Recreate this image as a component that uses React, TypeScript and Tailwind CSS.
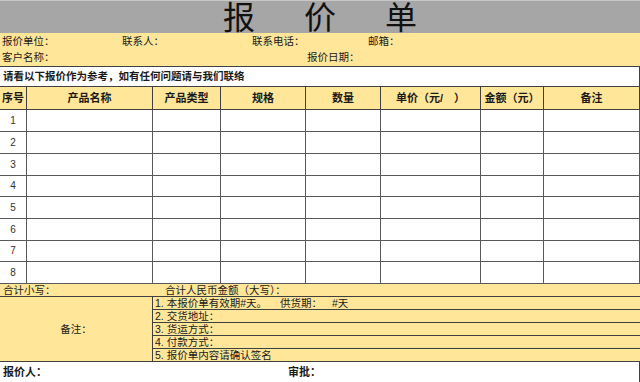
import React from "react";

const cols = "grid grid-cols-[27px_126px_68px_85px_75px_100px_63px_96px]";
const headers = ["序号", "产品名称", "产品类型", "规格", "数量", "单价（元/　）", "金额（元）", "备注"];
const rowHeights = [22, 22, 22, 21, 22, 22, 21, 22];

export default function App() {
  return (
    <div
      className="w-[640px] h-[382px] overflow-hidden bg-white text-[#1a1a1a] text-[10.5px]"
      style={{ fontFamily: '"Liberation Sans", "Noto Sans CJK SC", sans-serif' }}
    >
      {/* Title */}
      <div className="h-[33px] bg-[#a6a6a6] border-t border-[#c8c8c8] flex justify-center items-start gap-[49px] pt-[3px] text-[32px] leading-[28px] text-[#111] overflow-visible relative z-10">
        <span>报</span>
        <span>价</span>
        <span>单</span>
      </div>

      {/* Info */}
      <div className="h-[34px] bg-[#ffe699] border-b border-[#404040] flex flex-col">
        <div className="h-[16px] flex items-center pl-[2px] leading-none">
          <span className="w-[120px]">报价单位：</span>
          <span className="w-[130px]">联系人：</span>
          <span className="w-[116px]">联系电话：</span>
          <span>邮箱：</span>
        </div>
        <div className="h-[17px] flex items-center pl-[2px] leading-none">
          <span className="w-[305px]">客户名称：</span>
          <span>报价日期：</span>
        </div>
      </div>

      {/* Instruction */}
      <div className="h-[20px] border-b border-r border-[#404040] flex items-center pl-[3px] font-bold leading-none">
        请看以下报价作为参考，如有任何问题请与我们联络
      </div>

      {/* Header */}
      <div className={`${cols} h-[23px] bg-[#ffe699] border-b border-[#404040]`}>
        {headers.map((h) => (
          <div
            key={h}
            className="border-r border-[#404040] flex items-center justify-center font-bold text-[11px] leading-none whitespace-pre"
          >
            {h}
          </div>
        ))}
      </div>

      {/* Data rows */}
      {rowHeights.map((h, i) => (
        <div
          key={i}
          className={`${cols} ${h === 22 ? "h-[22px]" : "h-[21px]"} border-b border-[#595959]`}
        >
          {headers.map((_, j) => (
            <div
              key={j}
              className="border-r border-[#595959] flex items-center justify-center text-[10px] text-[#333] leading-none"
            >
              {j === 0 ? i + 1 : ""}
            </div>
          ))}
        </div>
      ))}

      {/* Total */}
      <div className="h-[13px] bg-[#ffe699] border-b border-[#404040] flex items-center pl-[3px] leading-none">
        <span className="w-[162px]">合计小写：</span>
        <span>合计人民币金额（大写）：</span>
      </div>

      {/* Remarks */}
      <div className="h-[65px] bg-[#ffe699] flex">
        <div className="w-[153px] border-r border-b border-[#404040] flex items-center justify-center leading-none">
          备注：
        </div>
        <div className="flex-1 flex flex-col">
          <div className="h-[13px] border-b border-[#404040] flex items-center pl-[2px] leading-none">
            <span className="w-[125px]">1. 本报价单有效期#天。</span>
            <span className="w-[52px]">供货期：</span>
            <span>#天</span>
          </div>
          <div className="h-[13px] border-b border-[#404040] flex items-center pl-[2px] leading-none">2. 交货地址：</div>
          <div className="h-[13px] border-b border-[#404040] flex items-center pl-[2px] leading-none">3. 货运方式：</div>
          <div className="h-[13px] border-b border-[#404040] flex items-center pl-[2px] leading-none">4. 付款方式：</div>
          <div className="h-[13px] border-b border-[#404040] flex items-center pl-[2px] leading-none">5. 报价单内容请确认签名</div>
        </div>
      </div>

      {/* Bottom */}
      <div className="h-[21px] border-b border-r border-[#404040] flex items-center pl-[3px] font-bold text-[11px] leading-none">
        <span className="w-[285px]">报价人：</span>
        <span>审批：</span>
      </div>
    </div>
  );
}
